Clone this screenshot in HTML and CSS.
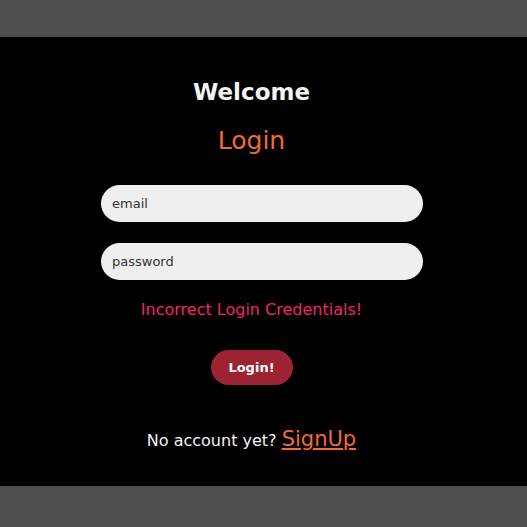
FILE: index.html
```html
<!DOCTYPE html>
<html>
<head>
<meta charset="utf-8">
<link rel="stylesheet" href="styles.css">
</head>
<body>
<main class="panel">
  <h1 class="welcome">Welcome</h1>
  <h2 class="title">Login</h2>
  <form class="form">
    <input class="field" type="text" placeholder="email">
    <input class="field field-second" type="password" placeholder="password">
    <p class="error">Incorrect Login Credentials!</p>
    <button class="btn" type="button">Login!</button>
  </form>
  <p class="signup">No account yet? <a href="#" class="signup-link">SignUp</a></p>
</main>
</body>
</html>
```
FILE: styles.css
```css
html, body {
  margin: 0;
  padding: 0;
}
body {
  background: #4f4f51;
  height: 527px;
  font-family: "DejaVu Sans", "Open Sans", sans-serif;
  overflow: hidden;
}
.panel {
  margin-top: 37px;
  height: 449px;
  background: #000;
  display: flex;
  flex-direction: column;
  align-items: center;
  padding: 40px 24px 0 0;
  box-sizing: border-box;
}
.welcome {
  margin: 0;
  font-size: 23px;
  line-height: 30px;
  font-weight: 700;
  color: #f4f4f4;
}
.title {
  margin: 19px 0 0;
  font-size: 25px;
  line-height: 30px;
  font-weight: 400;
  color: #f26a35;
}
.form {
  display: flex;
  flex-direction: column;
  align-items: center;
  margin-top: 29px;
}
.field {
  width: 322px;
  height: 37px;
  margin-left: 21px;
  box-sizing: border-box;
  border: none;
  border-radius: 19px;
  background: #efefef;
  padding: 0 11px;
  font-family: inherit;
  font-size: 13px;
  color: #333;
  outline: none;
}
.field::placeholder {
  color: #333;
}
.field-second {
  margin-top: 21px;
}
.error {
  margin: 20px 0 0;
  font-size: 16px;
  line-height: 20px;
  color: #f3246b;
}
.btn {
  margin-top: 30px;
  width: 82px;
  height: 35px;
  border: none;
  border-radius: 18px;
  background: #9c2333;
  color: #fff;
  font-family: inherit;
  font-size: 13px;
  font-weight: 700;
}
.signup {
  margin: 42px 0 0;
  font-size: 16px;
  line-height: 24px;
  color: #f4f4f4;
}
.signup-link {
  font-size: 21px;
  color: #f26a35;
  text-decoration: underline;
}
```
